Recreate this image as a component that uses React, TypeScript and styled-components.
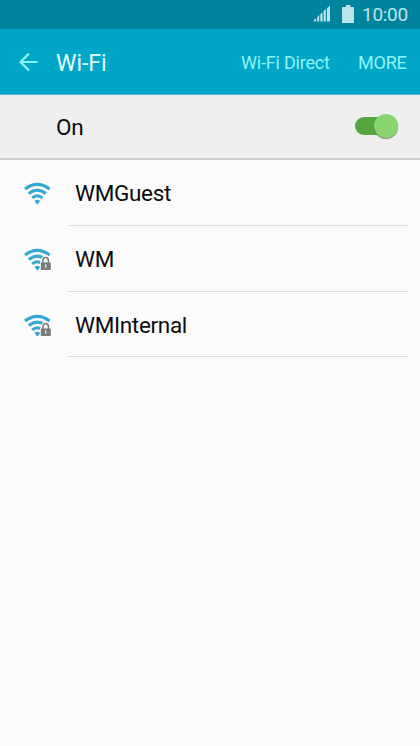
import React from "react";
import styled, { createGlobalStyle } from "styled-components";

const GlobalStyle = createGlobalStyle`
  * { box-sizing: border-box; }
  body { margin: 0; background: #fbfbfb; font-family: Roboto, sans-serif; }
`;

const Screen = styled.div`
  display: flex;
  flex-direction: column;
  width: 420px;
  height: 746px;
  overflow: hidden;
  background: #fbfbfb;
  color: #0c0c0c;
`;

const StatusBar = styled.div`
  display: flex;
  align-items: center;
  justify-content: flex-end;
  height: 29px;
  padding-right: 12px;
  background: #00839d;
  color: #bce4ea;
`;

const SignalIcon = styled.svg`
  margin-right: 12px;
  margin-bottom: 2px;
`;

const BatteryIcon = styled.svg`
  margin-right: 8px;
  margin-bottom: 2px;
`;

const Clock = styled.span`
  width: 46px;
  font-size: 19px;
  line-height: 28px;
  letter-spacing: -0.3px;
  white-space: nowrap;
`;

const AppBar = styled.header`
  display: flex;
  align-items: center;
  height: 66px;
  padding: 0 14px 0 19px;
  border-bottom: 1px solid #55bfd2;
  background: #00a6c7;
`;

const BackButton = styled.button`
  display: flex;
  width: 37px;
  padding: 0;
  border: 0;
  background: none;
  color: #8cf5f5;
`;

const Title = styled.h1`
  flex: 1;
  margin: 4px 0 0;
  color: #e6ffff;
  font-size: 23px;
  font-weight: 400;
  line-height: 28px;
`;

const Action = styled.button<{ $width: number }>`
  width: ${(p) => p.$width}px;
  margin-top: 2px;
  margin-left: 28px;
  padding: 0;
  border: 0;
  background: none;
  color: #8cf5f5;
  font: 400 18px/24px Roboto, sans-serif;
  letter-spacing: -0.2px;
  text-align: left;
  white-space: nowrap;
`;

const PowerRow = styled.div`
  display: flex;
  align-items: center;
  justify-content: space-between;
  height: 65px;
  padding: 0 20px 0 56px;
  border-bottom: 2px solid #d0d0d0;
  background: #efefef;
`;

const Label = styled.span`
  font-size: 22.5px;
  line-height: 28px;
  letter-spacing: -0.32px;
`;

const Switch = styled.button`
  display: flex;
  align-items: center;
  justify-content: flex-end;
  width: 42px;
  height: 18px;
  margin-right: 3px;
  margin-bottom: 1px;
  padding: 0;
  border: 0;
  border-radius: 9px;
  background: #56a53f;
`;

const Thumb = styled.span`
  flex: none;
  width: 24px;
  height: 24px;
  margin-right: -1px;
  border-radius: 50%;
  background: #89d46f;
  box-shadow: 0 1px 1px rgba(50, 70, 45, 0.6);
`;

const NetworkList = styled.ul`
  margin: 0;
  padding: 0 12px 0 23px;
  list-style: none;
`;

const NetworkRow = styled.li`
  display: flex;
  height: 66px;

  &:last-child {
    height: 65px;
  }
`;

const NetworkIcon = styled.svg`
  flex: none;
  width: 30px;
  height: 26px;
  margin: 21px 15px 0 0;
`;

const NetworkName = styled.div`
  display: flex;
  flex: 1;
  align-items: flex-start;
  padding: 19px 0 0 7px;
  border-bottom: 1px solid #dedede;
`;

function WifiIcon({ locked }: { locked: boolean }) {
  return (
    <NetworkIcon viewBox="0 0 30 26">
      <g fill="none" stroke="#35a8d1" strokeWidth="3.1">
        <path d="M2 8Q14.3-1.2 26.6 8" />
        <path d="M5.7 12.5Q14.3 5.8 22.9 12.5" />
        <path d="M9.2 16.9Q14.3 12.6 19.4 16.9" />
      </g>
      <path
        d="M12.5 20Q14.3 18.9 16.1 20L14.3 22.4Z"
        fill="#35a8d1"
        stroke="#35a8d1"
        strokeWidth="1.6"
        strokeLinejoin="round"
      />
      {locked && (
        <>
          <path
            d="M17 14.6H18V13.3a4.6 4.6 0 0 1 9.4 0V14.6H28.8V25H17Z"
            fill="#fbfbfb"
          />
          <path d="M20 17V13.4a2.7 2.9 0 0 1 5.4 0V17" fill="none" stroke="#7b7b7d" strokeWidth="1.5" />
          <rect x="17.8" y="15.5" width="10" height="7.4" rx=".6" fill="#7b7b7d" />
          <path d="M22.7 17.4v3.2" stroke="#e2e2e2" strokeWidth="1.5" />
        </>
      )}
    </NetworkIcon>
  );
}

const networks = [
  { name: "WMGuest", locked: false },
  { name: "WM", locked: true },
  { name: "WMInternal", locked: true },
];

export default function App() {
  return (
    <>
      <GlobalStyle />
      <Screen>
        <StatusBar>
          <SignalIcon width="16" height="17" viewBox="0 0 16 17" fill="#bce4ea">
            <path d="M0 16.4V15l2-1.8v3.2ZM3.2 16.4V12l2-2v6.4ZM6.3 16.4V9.3l2.2-2v9.1ZM9.6 16.4V6l2.2-2v12.4ZM12.9 16.4V3.2L16 .4v16Z" />
          </SignalIcon>
          <BatteryIcon width="12" height="18" viewBox="0 0 12 18" fill="#bce4ea">
            <path d="M4 0h4.5v2H12v16H0V2h4Z" />
          </BatteryIcon>
          <Clock>10:00</Clock>
        </StatusBar>
        <AppBar>
          <BackButton aria-label="Back">
            <svg width="20" height="20" viewBox="0 0 20 20" fill="none" stroke="currentColor" strokeWidth="2.2">
              <path d="M18.5 10H1.8M9.9 1.6 1.5 10l8.4 8.4" />
            </svg>
          </BackButton>
          <Title>Wi-Fi</Title>
          <Action $width={89}>Wi-Fi Direct</Action>
          <Action $width={48}>MORE</Action>
        </AppBar>
        <PowerRow>
          <Label>On</Label>
          <Switch role="switch" aria-checked="true" aria-label="Wi-Fi">
            <Thumb />
          </Switch>
        </PowerRow>
        <NetworkList>
          {networks.map((n) => (
            <NetworkRow key={n.name}>
              <WifiIcon locked={n.locked} />
              <NetworkName>
                <Label>{n.name}</Label>
              </NetworkName>
            </NetworkRow>
          ))}
        </NetworkList>
      </Screen>
    </>
  );
}
